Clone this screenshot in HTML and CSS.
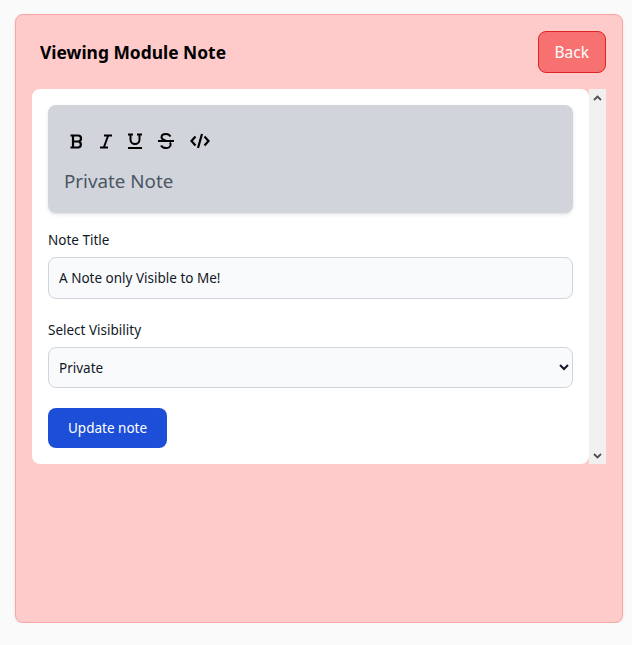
FILE: index.html
```html
<!DOCTYPE html>
<html lang="en">
<head>
    <meta charset="UTF-8">
    <meta name="viewport" content="width=device-width, initial-scale=1.0">
    <title>Viewing Module Note</title>
    <link rel="stylesheet" href="styles.css">
</head>
<body>
    <div class="page">
        <div class="note-card">
            <div class="note-header">
                <h2>Viewing Module Note</h2>
                <button class="back-btn">Back</button>
            </div>
            <div class="note-scroll">
                <div class="note-body">
                    <div class="editor">
                        <div class="toolbar">
                            <button class="tool" title="Bold">
                                <svg width="14" height="15" viewBox="0 0 14 15" fill="none" stroke="#000" stroke-width="2.2">
                                    <path d="M0.5 1.5h7.5a3 3 0 0 1 0 6H3M0.5 13.5h8a3.1 3.1 0 0 0 0-6H3M3 1.5v12"/>
                                </svg>
                            </button>
                            <button class="tool" title="Italic">
                                <svg width="12" height="15" viewBox="0 0 12 15" fill="none" stroke="#000" stroke-width="2">
                                    <path d="M4 1.5h8M0 13.5h8M8.2 1.5L3.8 13.5"/>
                                </svg>
                            </button>
                            <button class="tool" title="Underline">
                                <svg width="14" height="16" viewBox="0 0 14 16" fill="none" stroke="#000" stroke-width="2">
                                    <path d="M0 1.5h5M9 1.5h5M2.5 1.5v5a4.5 4.5 0 0 0 9 0v-5M0 15h14"/>
                                </svg>
                            </button>
                            <button class="tool" title="Strike">
                                <svg width="16" height="16" viewBox="0 0 16 16" fill="none" stroke="#000" stroke-width="2">
                                    <path d="M12.5 3.5C11.5 1.8 10 1 8 1 5.5 1 3.5 2.2 3.5 4.3c0 1.6 1.5 2.5 4 3.2M0 8h16M11.8 9.5c0.6 0.6 0.8 1.2 0.8 1.9 0 2-2 3.6-4.6 3.6-2.3 0-4-0.8-5-2.6"/>
                                </svg>
                            </button>
                            <button class="tool" title="Code">
                                <svg width="20" height="16" viewBox="0 0 20 16" fill="none" stroke="#000" stroke-width="2.2">
                                    <path d="M5.5 3.5L1.5 8l4 4.5M14.5 3.5l4 4.5-4 4.5M12 1L8 15"/>
                                </svg>
                            </button>
                        </div>
                        <div class="editor-text">Private Note</div>
                    </div>

                    <label class="field-label" for="noteTitle">Note Title</label>
                    <input class="field" type="text" id="noteTitle" value="A Note only Visible to Me!">

                    <label class="field-label second" for="visibility">Select Visibility</label>
                    <select class="field" id="visibility">
                        <option>Private</option>
                        <option>Public</option>
                    </select>

                    <button class="update-btn">Update note</button>
                </div>
                <div class="scroll-rail">
                    <svg width="9" height="6" viewBox="0 0 9 6" fill="none" stroke="#505050" stroke-width="1.8">
                        <path d="M1 5l3.5-3.5L8 5"/>
                    </svg>
                    <svg width="9" height="6" viewBox="0 0 9 6" fill="none" stroke="#505050" stroke-width="1.8">
                        <path d="M1 1l3.5 3.5L8 1"/>
                    </svg>
                </div>
            </div>
        </div>
    </div>
</body>
</html>
```

FILE: styles.css
```css
body {
    margin: 0;
    background-color: #fafafa;
    font-family: "Noto Sans", "Open Sans", sans-serif;
    color: #111827;
}

.page {
    padding: 14px 9px 0 15px;
}

.note-card {
    box-sizing: border-box;
    height: 609px;
    background-color: #fecaca;
    border: 1px solid #fca5a5;
    border-radius: 8px;
    padding: 16px;
    box-shadow: 0 1px 3px rgba(0, 0, 0, 0.1);
}

.note-header {
    display: flex;
    justify-content: space-between;
    align-items: center;
    margin-bottom: 16px;
}

.note-header h2 {
    margin: 0 0 0 8px;
    font-size: 17.4px;
    font-weight: 700;
    color: #000;
}

.back-btn {
    height: 42px;
    padding: 0 16px;
    background-color: #f87171;
    border: 1px solid #dc2626;
    border-radius: 8px;
    color: #fff;
    font-family: inherit;
    font-size: 15.5px;
}

.note-scroll {
    display: flex;
    height: 375px;
}

.note-body {
    box-sizing: border-box;
    flex: 1;
    background-color: #fff;
    border-radius: 8px;
    padding: 16px;
    display: flex;
    flex-direction: column;
    align-items: flex-start;
}

.scroll-rail {
    width: 17px;
    background-color: #f0f0f0;
    display: flex;
    flex-direction: column;
    justify-content: space-between;
    align-items: center;
    padding: 6px 0 5px;
}

.editor {
    align-self: stretch;
    background-color: #d1d5db;
    border-radius: 8px;
    padding: 16px 16px 18px;
    box-shadow: 0 2px 4px rgba(0, 0, 0, 0.08), 0 1px 2px rgba(0, 0, 0, 0.06);
}

.toolbar {
    height: 40px;
    display: flex;
    align-items: center;
    gap: 16px;
    padding-left: 6px;
    margin-bottom: 6px;
}

.tool {
    display: flex;
    padding: 0;
    border: none;
    background: none;
}

.editor-text {
    font-size: 18.8px;
    line-height: 28px;
    color: #4b5563;
}

.field-label {
    margin: 17px 0 7px;
    font-size: 13.5px;
    line-height: 20px;
}

.field-label.second {
    margin-top: 21px;
}

.field {
    box-sizing: border-box;
    align-self: stretch;
    height: 42px;
    padding: 0 10px;
    background-color: #f9fafb;
    border: 1px solid #d1d5db;
    border-radius: 8px;
    font-family: inherit;
    font-size: 13.5px;
    color: #111827;
}

select.field {
    height: 41px;
    padding: 0 6px;
}

.update-btn {
    margin-top: 20px;
    height: 40px;
    padding: 0 20px;
    background-color: #1d4ed8;
    border: none;
    border-radius: 8px;
    color: #fff;
    font-family: inherit;
    font-size: 13.5px;
}
```
